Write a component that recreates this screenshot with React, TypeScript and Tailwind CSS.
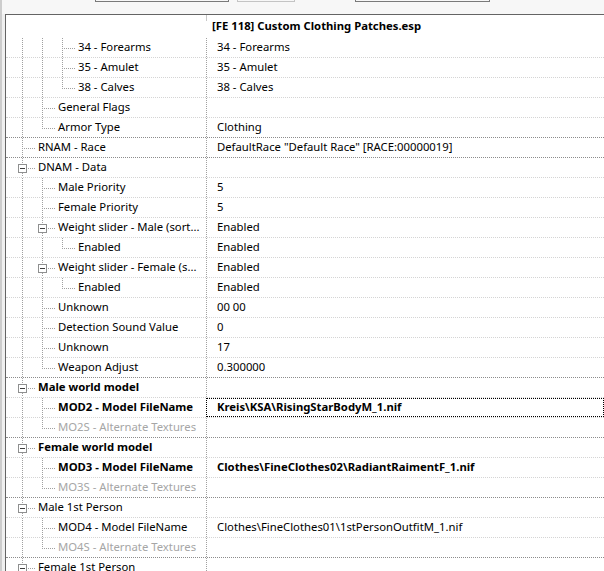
type Row = {
  level: number
  label: string
  value?: string
  toggle?: boolean
  last?: boolean
  bold?: boolean
  dim?: boolean
  focus?: boolean
}

const ROWS: Row[] = [
  { level: 2, label: '34 - Forearms', value: '34 - Forearms' },
  { level: 2, label: '35 - Amulet', value: '35 - Amulet' },
  { level: 2, label: '38 - Calves', value: '38 - Calves', last: true },
  { level: 1, label: 'General Flags' },
  { level: 1, label: 'Armor Type', value: 'Clothing', last: true },
  { level: 0, label: 'RNAM - Race', value: 'DefaultRace "Default Race" [RACE:00000019]' },
  { level: 0, label: 'DNAM - Data', toggle: true },
  { level: 1, label: 'Male Priority', value: '5' },
  { level: 1, label: 'Female Priority', value: '5' },
  { level: 1, label: 'Weight slider - Male (sort...', value: 'Enabled', toggle: true },
  { level: 2, label: 'Enabled', value: 'Enabled', last: true },
  { level: 1, label: 'Weight slider - Female (s...', value: 'Enabled', toggle: true },
  { level: 2, label: 'Enabled', value: 'Enabled', last: true },
  { level: 1, label: 'Unknown', value: '00 00' },
  { level: 1, label: 'Detection Sound Value', value: '0' },
  { level: 1, label: 'Unknown', value: '17' },
  { level: 1, label: 'Weapon Adjust', value: '0.300000', last: true },
  { level: 0, label: 'Male world model', toggle: true, bold: true },
  { level: 1, label: 'MOD2 - Model FileName', value: 'Kreis\\KSA\\RisingStarBodyM_1.nif', bold: true, focus: true },
  { level: 1, label: 'MO2S - Alternate Textures', dim: true, last: true },
  { level: 0, label: 'Female world model', toggle: true, bold: true },
  { level: 1, label: 'MOD3 - Model FileName', value: 'Clothes\\FineClothes02\\RadiantRaimentF_1.nif', bold: true },
  { level: 1, label: 'MO3S - Alternate Textures', dim: true, last: true },
  { level: 0, label: 'Male 1st Person', toggle: true },
  { level: 1, label: 'MOD4 - Model FileName', value: 'Clothes\\FineClothes01\\1stPersonOutfitM_1.nif' },
  { level: 1, label: 'MO4S - Alternate Textures', dim: true, last: true },
  { level: 0, label: 'Female 1st Person', toggle: true },
]

const GUIDE = '#a0a0a0'

// tree guide lines + expand box, drawn per row
function Guides({ row }: { row: Row }) {
  const w = 32 + row.level * 20
  const own = 16 + row.level * 20 + 0.5
  return (
    <svg width={w} height={19} className="shrink-0" shapeRendering="crispEdges">
      {Array.from({ length: row.level }, (_, k) => (
        <line key={k} x1={16 + 20 * k + 0.5} y1={0} x2={16 + 20 * k + 0.5} y2={19} stroke={GUIDE} strokeDasharray="1 1" />
      ))}
      {row.toggle ? (
        <>
          <line x1={own} y1={0} x2={own} y2={6} stroke={GUIDE} strokeDasharray="1 1" />
          {!row.last && <line x1={own} y1={15} x2={own} y2={19} stroke={GUIDE} strokeDasharray="1 1" />}
          <rect x={own - 4} y={6.5} width={8} height={8} fill="#fff" stroke="#8e8f8f" />
          <line x1={own - 2.5} y1={10.5} x2={own + 2.5} y2={10.5} stroke="#3c3c3c" />
          <line x1={own + 5.5} y1={10.5} x2={own + 13.5} y2={10.5} stroke={GUIDE} strokeDasharray="1 1" />
        </>
      ) : (
        <>
          <line x1={own} y1={0} x2={own} y2={row.last ? 11 : 19} stroke={GUIDE} strokeDasharray="1 1" />
          <line x1={own + 1.5} y1={10.5} x2={own + 13.5} y2={10.5} stroke={GUIDE} strokeDasharray="1 1" />
        </>
      )}
    </svg>
  )
}

function TreeRow({ row, next }: { row: Row; next?: Row }) {
  const sep = next?.level === 0
  return (
    <div
      className={`flex h-[20px] shrink-0 border-b border-dotted ${sep ? 'border-[#8c8c8c]' : 'border-[#d4d4d4]'}`}
    >
      <div className="flex w-[200px] shrink-0 items-center overflow-hidden">
        <Guides row={row} />
        <span
          className={`whitespace-nowrap ${row.bold ? 'font-bold' : ''} ${row.dim ? 'text-[#a6a6a6]' : 'text-black'}`}
        >
          {row.label}
        </span>
      </div>
      <div
        className={`flex flex-1 items-center border-l border-dotted border-[#a0a0a0] pl-[10px] whitespace-nowrap ${
          row.bold ? 'font-bold' : ''
        } ${row.focus ? 'outline outline-1 outline-dotted outline-black -outline-offset-1' : ''}`}
      >
        {row.value}
      </div>
    </div>
  )
}

export default function App() {
  return (
    <div className="flex h-[571px] w-[604px] overflow-hidden bg-[#f0f0f0] font-['Noto_Sans',sans-serif] text-[11.3px] text-black">
      <div className="w-[2px] shrink-0 bg-[#cdcdcd]" />
      <div className="flex min-w-0 flex-1 flex-col">
        {/* toolbar (only the bottoms of the edit boxes are visible) */}
        <div className="flex h-[14px] shrink-0 items-start bg-[#f7f7f7]">
          <div className="ml-[93px] h-[2px] w-[134px] border-x border-b border-[#7a7a7a]" />
          <div className="ml-[8px] h-[2px] w-[58px] border-x border-b border-[#c4c4c4]" />
          <div className="ml-[60px] h-[2px] w-[135px] border-x border-b border-[#7a7a7a]" />
        </div>

        <div className="ml-[3px] flex min-h-0 flex-1 flex-col border-l border-t border-[#646464] bg-white">
          <div className="flex h-[23px] shrink-0">
            <div className="w-[200px] shrink-0" />
            <div className="relative flex flex-1 items-center pl-[6px] font-bold">
              <span className="absolute left-0 top-0 h-[6px] w-px bg-[#c8c8c8]" />
              [FE 118] Custom Clothing Patches.esp
            </div>
          </div>
          {ROWS.map((r, i) => (
            <TreeRow key={i} row={r} next={ROWS[i + 1]} />
          ))}
        </div>
      </div>
    </div>
  )
}
